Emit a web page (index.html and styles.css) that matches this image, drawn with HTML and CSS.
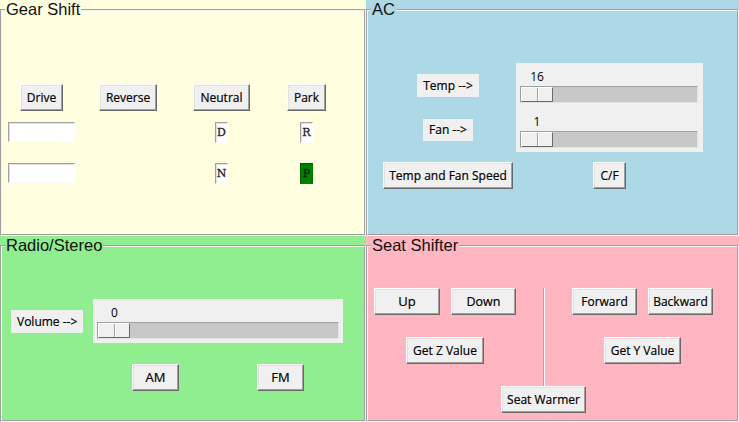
FILE: index.html
```html
<!DOCTYPE html>
<html>
<head>
<meta charset="utf-8">
<link rel="stylesheet" href="styles.css">
</head>
<body>
<div class="app">
  <div class="panel yellow">
    <fieldset class="frame">
      <legend>Gear Shift</legend>
      <div class="gear-body">
        <button class="btn">Drive</button>
        <button class="btn">Reverse</button>
        <button class="btn">Neutral</button>
        <button class="btn">Park</button>
        <div class="entry"></div>
        <div></div>
        <div class="cell">D</div>
        <div class="cell">R</div>
        <div class="entry"></div>
        <div></div>
        <div class="cell">N</div>
        <div class="cell on">P</div>
      </div>
    </fieldset>
  </div>

  <div class="panel blue">
    <fieldset class="frame">
      <legend>AC</legend>
      <div class="ac-body">
        <div class="tag temp">Temp --&gt;</div>
        <div class="scales ac-scales">
          <div class="scale">
            <div class="value"><span>16</span></div>
            <div class="trough"><div class="thumb"></div></div>
          </div>
          <div class="scale">
            <div class="value"><span>1</span></div>
            <div class="trough"><div class="thumb"></div></div>
          </div>
        </div>
        <div class="tag fan">Fan --&gt;</div>
        <button class="btn tfs">Temp and Fan Speed</button>
        <button class="btn cf">C/F</button>
      </div>
    </fieldset>
  </div>

  <div class="panel green">
    <fieldset class="frame">
      <legend>Radio/Stereo</legend>
      <div class="radio-body">
        <div class="vol-row">
          <div class="tag">Volume --&gt;</div>
          <div class="scales radio-scales">
            <div class="scale">
              <div class="value"><span>0</span></div>
              <div class="trough"><div class="thumb"></div></div>
            </div>
          </div>
        </div>
        <div class="band-row">
          <button class="btn band">AM</button>
          <button class="btn band">FM</button>
        </div>
      </div>
    </fieldset>
  </div>

  <div class="panel pink">
    <fieldset class="frame">
      <legend>Seat Shifter</legend>
      <div class="seat-body">
        <button class="btn fixed up">Up</button>
        <button class="btn fixed down">Down</button>
        <div class="sep"></div>
        <button class="btn fixed fwd">Forward</button>
        <button class="btn fixed back">Backward</button>
        <button class="btn getz">Get Z Value</button>
        <button class="btn gety">Get Y Value</button>
        <button class="btn warm">Seat Warmer</button>
      </div>
    </fieldset>
  </div>
</div>
</body>
</html>
```

FILE: styles.css
```css
html, body {
  margin: 0;
  padding: 0;
}

body {
  width: 739px;
  height: 422px;
  overflow: hidden;
  background: #f0f0f0;
  font-family: "Open Sans", sans-serif;
}

.app {
  display: grid;
  grid-template-columns: 366px 373px;
  grid-template-rows: 236px 186px;
  width: 739px;
  height: 422px;
}

.panel {
  display: flex;
  min-width: 0;
  min-height: 0;
}

.yellow { background: #ffffe0; }
.blue { background: #add8e6; }
.green { background: #90ee90; }
.pink { background: #ffb6c1; }

.frame {
  flex: 1;
  margin: 0;
  padding: 0;
  min-width: 0;
  border: 2px groove #f4f4f4;
}

.frame legend {
  margin-left: 3px;
  padding: 0 1px;
  font-family: "Liberation Sans", Arial, sans-serif;
  font-size: 16.5px;
  line-height: 19px;
  color: #111;
}

/* generic Tk-like widgets */
.btn {
  box-sizing: border-box;
  height: 27px;
  margin: 0;
  padding: 0 6px;
  font-family: "Open Sans", sans-serif;
  font-size: 12px;
  line-height: 23px;
  color: #000;
  -webkit-text-stroke: 0.2px #000;
  background: #f0f0f0;
  border: 1px solid;
  border-color: #fff #696969 #696969 #fff;
  box-shadow: inset -1px -1px 0 #a0a0a0, inset 1px 1px 0 #e3e3e3;
  border-radius: 0;
  white-space: nowrap;
}

.tag {
  box-sizing: border-box;
  height: 23px;
  padding: 0 6px;
  font-size: 12px;
  line-height: 23px;
  color: #000;
  -webkit-text-stroke: 0.2px #000;
  background: #f0f0f0;
  white-space: nowrap;
}

.entry {
  box-sizing: border-box;
  width: 67px;
  height: 20px;
  background: #fff;
  border: 1px solid;
  border-color: #a0a0a0 #fff #fff #a0a0a0;
  box-shadow: inset 1px 1px 0 #e3e3e3;
}

.cell {
  box-sizing: border-box;
  width: 13px;
  height: 21px;
  background: #fff;
  border: 1px solid;
  border-color: #a0a0a0 #fff #fff #a0a0a0;
  box-shadow: inset 1px 1px 0 #e3e3e3;
  font-family: "DejaVu Serif", "Liberation Serif", serif;
  font-size: 11px;
  line-height: 19px;
  text-align: center;
  color: #222;
  -webkit-text-stroke: 0.3px #222;
}

.cell.on {
  background: #008000;
  border-color: #006000 #008000 #008000 #006000;
  box-shadow: none;
  color: #0a200a;
  -webkit-text-stroke: 0.3px #0a200a;
}

/* scales */
.scales {
  box-sizing: border-box;
  display: flex;
  flex-direction: column;
  gap: 9px;
  padding: 4px 5px 4px 4px;
  background: #f0f0f0;
}

.value {
  height: 19px;
  font-size: 12px;
  line-height: 19px;
  color: #000;
}

.value span {
  display: inline-block;
  width: 32px;
  margin-left: 1px;
  text-align: center;
}

.trough {
  box-sizing: border-box;
  height: 17px;
  background: #c8c8c8;
  border: 1px solid;
  border-color: #a0a0a0 #e3e3e3 #e3e3e3 #a0a0a0;
  display: flex;
}

.thumb {
  box-sizing: border-box;
  width: 32px;
  height: 15px;
  background: linear-gradient(to right, transparent 15px, #a0a0a0 15px, #a0a0a0 16px, #fff 16px, #fff 17px, transparent 17px), #f0f0f0;
  border: 1px solid;
  border-color: #fff #696969 #696969 #fff;
}

/* Gear Shift */
.gear-body {
  display: grid;
  grid-template-columns: 79px 94px 93px 77px;
  grid-template-rows: 38px 41px 20px;
  justify-items: center;
  align-items: start;
  padding-top: 65px;
}

/* AC */
.ac-body {
  display: grid;
  grid-template-columns: 136px 187px;
  grid-template-rows: 44px 45px 37px;
  padding: 44px 0 0 12px;
}

.ac-body .temp {
  grid-column: 1;
  grid-row: 1;
  justify-self: center;
  align-self: center;
}

.ac-body .fan {
  grid-column: 1;
  grid-row: 2;
  justify-self: center;
  align-self: center;
  height: 22px;
  line-height: 22px;
}

.ac-scales {
  grid-column: 2;
  grid-row: 1 / 3;
}

.ac-body .tfs {
  grid-column: 1;
  grid-row: 3;
  justify-self: center;
  align-self: end;
  padding: 0 5px;
}

.ac-body .cf {
  grid-column: 2;
  grid-row: 3;
  justify-self: center;
  align-self: end;
}

/* Radio */
.radio-body {
  padding: 44px 0 0 9px;
}

.vol-row {
  display: flex;
  align-items: center;
  gap: 10px;
}

.radio-scales {
  width: 250px;
  padding: 4px;
}

.band-row {
  display: grid;
  grid-template-columns: 125px 125px;
  justify-items: center;
  margin: 21px 0 0 82px;
}

.band {
  width: 47px;
  padding: 0;
  text-align: center;
  font-size: 13px;
}

/* Seat Shifter */
.seat-body {
  display: grid;
  grid-template-columns: 66px 11px 65px 56px 65px 11px 65px;
  grid-template-rows: 27px 27px 27px;
  row-gap: 22px;
  padding: 33px 0 0 6px;
}

.fixed {
  width: 65px;
  padding: 0;
  text-align: center;
}

.seat-body .up { grid-column: 1; grid-row: 1; width: 66px; font-size: 13px; }
.seat-body .down { grid-column: 3; grid-row: 1; font-size: 12.5px; }
.seat-body .fwd { grid-column: 5; grid-row: 1; }
.seat-body .back { grid-column: 7; grid-row: 1; }

.seat-body .sep {
  grid-column: 4;
  grid-row: 1 / 4;
  justify-self: center;
  align-self: start;
  width: 1px;
  height: 99px;
  border-left: 1px solid #a8a8a8;
  background: #fff;
}

.seat-body .getz { grid-column: 1 / 4; grid-row: 2; justify-self: center; }
.seat-body .gety { grid-column: 5 / 8; grid-row: 2; justify-self: center; }
.seat-body .warm { grid-column: 1 / -1; grid-row: 3; justify-self: center; padding: 0 5px; }
```
